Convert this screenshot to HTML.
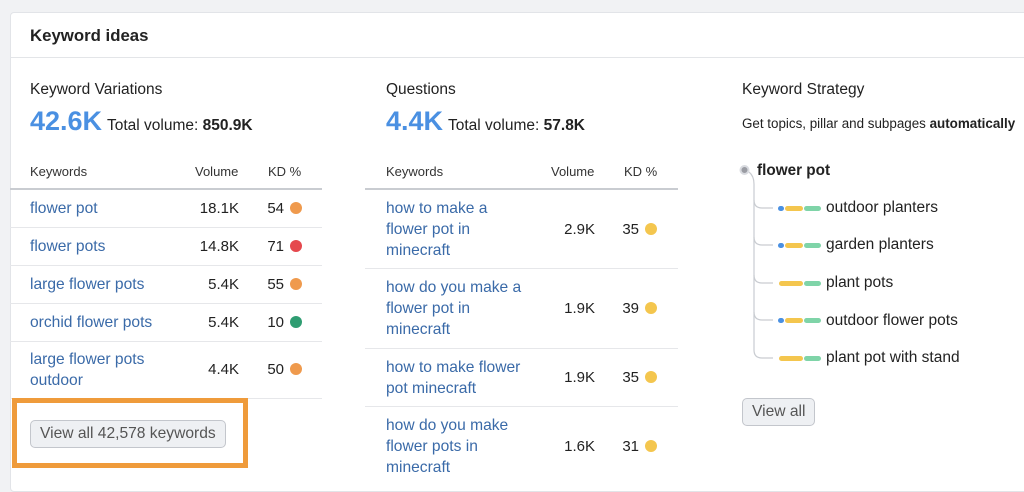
<!DOCTYPE html>
<html><head><meta charset="utf-8"><style>
*{margin:0;padding:0;box-sizing:border-box}
body{width:1024px;height:483px;background:#f1f2f4;font-family:"Liberation Sans",Arial,sans-serif;position:relative;overflow:hidden;color:#222}
.card{position:absolute;left:10px;top:12px;width:1020px;height:480px;background:#fff;border:1px solid #e2e4e8;border-radius:4px}
.a{position:absolute;white-space:nowrap;line-height:21px}
.h{height:1px;position:absolute;background:#e6e7ea}
.hd{background:#c9ccd1}
.lk{color:#3a6aa8;font-size:15.6px}
.n{font-size:15px;color:#222;text-align:right}
.th{font-size:13px;color:#333}
.dot{position:absolute;width:12px;height:12px;border-radius:50%}
.o{background:#ef9a4d}.r{background:#e5484d}.g{background:#2f9d72}.y{background:#f4c64e}
.big{font-size:27px;font-weight:bold;color:#4a90e2;line-height:30px}
.tv{font-size:15.5px;color:#222}
.btn{position:absolute;border:1px solid #c3c6cc;border-radius:5px;background:#eef0f3;color:#555;font-size:15.6px;line-height:26px;padding:0 9px}
.bar{position:absolute;height:5px;border-radius:3px}
.st{font-size:15.5px}
</style></head><body>
<div class="card"></div>
<div class="h" style="left:11px;top:57px;width:1013px;background:#e3e5e8"></div>
<div class="a" style="left:30px;top:25px;font-size:16.8px;font-weight:bold">Keyword ideas</div>

<!-- col1 -->
<div class="a" style="left:30px;top:79px;font-size:15.5px">Keyword Variations</div>
<div class="a big" style="left:30px;top:106px">42.6K</div>
<div class="a tv" style="left:107px;top:115px">Total volume: <b>850.9K</b></div>
<div class="a th" style="left:30px;top:161px">Keywords</div>
<div class="a th" style="left:195px;top:161px">Volume</div>
<div class="a th" style="left:268px;top:161px">KD %</div>
<div class="h hd" style="left:10px;top:188px;width:312px;height:1.5px"></div>

<div class="a lk" style="left:30px;top:198px">flower pot</div>
<div class="a n" style="left:160px;width:79px;top:198px">18.1K</div>
<div class="a n" style="left:250px;width:34px;top:198px">54</div><div class="dot o" style="left:290px;top:202px"></div>
<div class="h" style="left:10px;top:227px;width:312px"></div>
<div class="a lk" style="left:30px;top:236px">flower pots</div>
<div class="a n" style="left:160px;width:79px;top:236px">14.8K</div>
<div class="a n" style="left:250px;width:34px;top:236px">71</div><div class="dot r" style="left:290px;top:240px"></div>
<div class="h" style="left:10px;top:265px;width:312px"></div>
<div class="a lk" style="left:30px;top:274px">large flower pots</div>
<div class="a n" style="left:160px;width:79px;top:274px">5.4K</div>
<div class="a n" style="left:250px;width:34px;top:274px">55</div><div class="dot o" style="left:290px;top:278px"></div>
<div class="h" style="left:10px;top:303px;width:312px"></div>
<div class="a lk" style="left:30px;top:312px">orchid flower pots</div>
<div class="a n" style="left:160px;width:79px;top:312px">5.4K</div>
<div class="a n" style="left:250px;width:34px;top:312px">10</div><div class="dot g" style="left:290px;top:316px"></div>
<div class="h" style="left:10px;top:341px;width:312px"></div>
<div class="a lk" style="left:30px;top:349px">large flower pots<br>outdoor</div>
<div class="a n" style="left:160px;width:79px;top:359px">4.4K</div>
<div class="a n" style="left:250px;width:34px;top:359px">50</div><div class="dot o" style="left:290px;top:363px"></div>
<div class="h" style="left:10px;top:398px;width:312px"></div>
<div class="btn" style="left:30px;top:420px">View all 42,578 keywords</div>
<div style="position:absolute;left:12px;top:398px;width:236px;height:70px;border:5px solid #ef9b3b"></div>

<!-- col2 -->
<div class="a" style="left:386px;top:79px;font-size:15.5px">Questions</div>
<div class="a big" style="left:386px;top:106px">4.4K</div>
<div class="a tv" style="left:448px;top:115px">Total volume: <b>57.8K</b></div>
<div class="a th" style="left:386px;top:161px">Keywords</div>
<div class="a th" style="left:551px;top:161px">Volume</div>
<div class="a th" style="left:624px;top:161px">KD %</div>
<div class="h hd" style="left:365px;top:188px;width:313px;height:1.5px"></div>

<div class="a lk" style="left:386px;top:198px">how to make a<br>flower pot in<br>minecraft</div>
<div class="a n" style="left:520px;width:75px;top:219px">2.9K</div>
<div class="a n" style="left:605px;width:34px;top:219px">35</div><div class="dot y" style="left:645px;top:223px"></div>
<div class="h" style="left:365px;top:268px;width:313px"></div>
<div class="a lk" style="left:386px;top:277px">how do you make a<br>flower pot in<br>minecraft</div>
<div class="a n" style="left:520px;width:75px;top:298px">1.9K</div>
<div class="a n" style="left:605px;width:34px;top:298px">39</div><div class="dot y" style="left:645px;top:302px"></div>
<div class="h" style="left:365px;top:348px;width:313px"></div>
<div class="a lk" style="left:386px;top:357px">how to make flower<br>pot minecraft</div>
<div class="a n" style="left:520px;width:75px;top:367px">1.9K</div>
<div class="a n" style="left:605px;width:34px;top:367px">35</div><div class="dot y" style="left:645px;top:371px"></div>
<div class="h" style="left:365px;top:406px;width:313px"></div>
<div class="a lk" style="left:386px;top:415px">how do you make<br>flower pots in<br>minecraft</div>
<div class="a n" style="left:520px;width:75px;top:436px">1.6K</div>
<div class="a n" style="left:605px;width:34px;top:436px">31</div><div class="dot y" style="left:645px;top:440px"></div>

<!-- col3 -->
<div class="a" style="left:742px;top:79px;font-size:15.5px">Keyword Strategy</div>
<div class="a" style="left:742px;top:113px;font-size:13.4px">Get topics, pillar and subpages <b>automatically</b></div>
<svg style="position:absolute;left:735px;top:160px" width="50" height="210" fill="none" stroke="#c9ccd1" stroke-width="1.2">
<circle cx="9.5" cy="10" r="4" fill="#9a9ca3" stroke="#d9dbe0" stroke-width="2"/>
<path d="M14 12 Q19 16 19 24 V190 Q19 198 27 198 H38"/>
<path d="M19 40 Q19 48 27 48 H38"/><path d="M19 77 Q19 85 27 85 H38"/><path d="M19 115 Q19 123 27 123 H38"/><path d="M19 152 Q19 160 27 160 H38"/>
</svg>
<div class="a" style="left:757px;top:160px;font-size:15.3px;font-weight:bold">flower pot</div>
<div class="bar" style="left:778px;top:206px;width:6px;background:#4a90e2"></div><div class="bar" style="left:785px;top:206px;width:18px;background:#f4c64e"></div><div class="bar" style="left:804px;top:206px;width:17px;background:#7fd4a8"></div>
<div class="a st" style="left:826px;top:197px">outdoor planters</div>
<div class="bar" style="left:778px;top:243px;width:6px;background:#4a90e2"></div><div class="bar" style="left:785px;top:243px;width:18px;background:#f4c64e"></div><div class="bar" style="left:804px;top:243px;width:17px;background:#7fd4a8"></div>
<div class="a st" style="left:826px;top:234px">garden planters</div>
<div class="bar" style="left:779px;top:281px;width:24px;background:#f4c64e"></div><div class="bar" style="left:804px;top:281px;width:17px;background:#7fd4a8"></div>
<div class="a st" style="left:826px;top:272px">plant pots</div>
<div class="bar" style="left:778px;top:318px;width:6px;background:#4a90e2"></div><div class="bar" style="left:785px;top:318px;width:18px;background:#f4c64e"></div><div class="bar" style="left:804px;top:318px;width:17px;background:#7fd4a8"></div>
<div class="a st" style="left:826px;top:310px">outdoor flower pots</div>
<div class="bar" style="left:779px;top:356px;width:24px;background:#f4c64e"></div><div class="bar" style="left:804px;top:356px;width:17px;background:#7fd4a8"></div>
<div class="a st" style="left:826px;top:347px">plant pot with stand</div>
<div class="btn" style="left:742px;top:398px">View all</div>
</body></html>
